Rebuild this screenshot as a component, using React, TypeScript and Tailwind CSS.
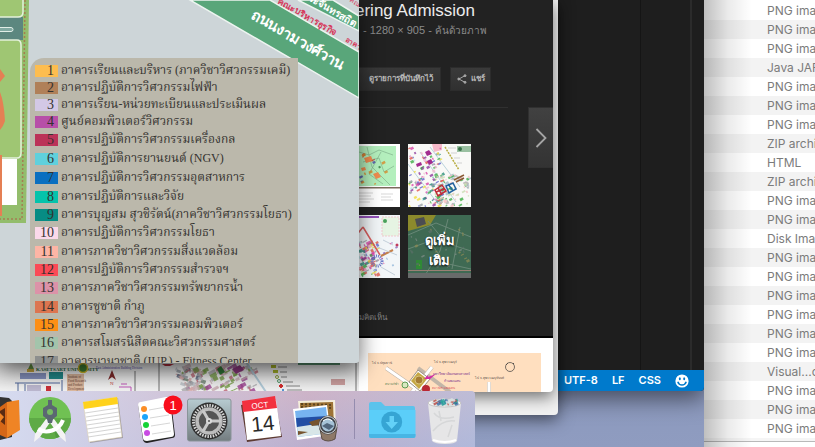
import React from "react";

type Legend = { n: number; name: string; swatch: string; tight?: boolean };

const legend: Legend[] = [
  { n: 1, name: "อาคารเรียนและบริหาร (ภาควิชาวิศวกรรมเคมี)", swatch: "bg-[#fdbd4f]", tight: true },
  { n: 2, name: "อาคารปฏิบัติการวิศวกรรมไฟฟ้า", swatch: "bg-[#b08058]", tight: true },
  { n: 3, name: "อาคารเรียน-หน่วยทะเบียนและประเมินผล", swatch: "bg-[#d3c8e6]", tight: true },
  { n: 4, name: "ศูนย์คอมพิวเตอร์วิศวกรรม", swatch: "bg-[#b74fa8]", tight: true },
  { n: 5, name: "อาคารปฏิบัติการวิศวกรรมเครื่องกล", swatch: "bg-[#bb3358]" },
  { n: 6, name: "อาคารปฏิบัติการยานยนต์ (NGV)", swatch: "bg-[#5fd0dc]" },
  { n: 7, name: "อาคารปฏิบัติการวิศวกรรมอุตสาหการ", swatch: "bg-[#0a6fc0]" },
  { n: 8, name: "อาคารปฏิบัติการและวิจัย", swatch: "bg-[#05c3ab]" },
  { n: 9, name: "อาคารบุญสม สุวชิรัตน์(ภาควิชาวิศวกรรมโยธา)", swatch: "bg-[#078c84]", tight: true },
  { n: 10, name: "อาคารปฏิบัติการวิศวกรรมโยธา", swatch: "bg-[#fbd9ea]" },
  { n: 11, name: "อาคารภาควิชาวิศวกรรมสิ่งแวดล้อม", swatch: "bg-[#fdb5a5]" },
  { n: 12, name: "อาคารปฏิบัติการวิศวกรรมสำรวจฯ", swatch: "bg-[#fb4b56]", tight: true },
  { n: 13, name: "อาคารภาควิชาวิศวกรรมทรัพยากรน้ำ", swatch: "bg-[#dc92a8]" },
  { n: 14, name: "อาคารชูชาติ กำภู", swatch: "bg-[#dc7550]" },
  { n: 15, name: "อาคารภาควิชาวิศวกรรมคอมพิวเตอร์", swatch: "bg-[#fd8f14]", tight: true },
  { n: 16, name: "อาคารสโมสรนิสิตคณะวิศวกรรมศาสตร์", swatch: "bg-[#a3c4ab]" },
  { n: 17, name: "อาคารนานาชาติ (IUP.) - Fitness Center", swatch: "bg-[#8d8f8e]" },
];

const kinds = [
  "PNG image", "PNG image", "PNG image", "Java JAR file", "PNG image", "PNG image",
  "PNG image", "ZIP archive", "HTML", "ZIP archive", "PNG image", "PNG image",
  "Disk Image", "PNG image", "PNG image", "PNG image", "PNG image", "PNG image",
  "PNG image", "Visual...cument", "PNG image", "PNG image", "PNG image",
];

const mapColors = ["#d946a8", "#3fae49", "#e2574c", "#5b62c9", "#f0dc3c", "#8e3a9d", "#b9e3ea", "#f3b9cf", "#9aa0a6", "#2a8f7d"];

function Blocks({ seed, count, x, y, w, h, size = 5, tilt = -28, colors = mapColors }: {
  seed: number; count: number; x: number; y: number; w: number; h: number; size?: number; tilt?: number; colors?: string[];
}) {
  let s = seed;
  const rnd = () => (s = (s * 16807) % 2147483647) / 2147483647;
  return (
    <g>
      {Array.from({ length: count }, (_, i) => {
        const px = x + rnd() * w;
        const py = y + rnd() * h;
        const bw = 1 + rnd() * size;
        const bh = 1 + rnd() * size * 0.6;
        const c = colors[Math.floor(rnd() * colors.length)];
        return <rect key={i} x={px} y={py} width={bw} height={bh} fill={c} opacity={0.8} transform={`rotate(${tilt} ${px} ${py})`} />;
      })}
    </g>
  );
}

function FinderWindow() {
  return (
    <section className="absolute inset-y-0 left-[704px] right-0 overflow-hidden bg-white font-[Inter,sans-serif]">
      <ul className="pt-px">
        {kinds.map((k, i) => (
          <li key={i} className="h-[19px] overflow-hidden whitespace-nowrap pl-[63px] text-[12px] leading-[19px] text-[#7b7b7b] even:bg-[#f3f3f3]">{k}</li>
        ))}
      </ul>
      <div className="h-[3px] bg-[#f5f5f5]" />
      <div className="h-4 border-t border-[#b9b9b9] bg-white" />
      <div className="absolute inset-y-0 left-0 w-12 bg-linear-to-r from-black/25 via-black/8 to-transparent" />
    </section>
  );
}

function EditorWindow() {
  return (
    <section className="absolute left-[540px] top-0 flex h-[391px] w-[164px] flex-col overflow-hidden rounded-br-[4px] bg-[#1e1e1e] shadow-[0_8px_22px_rgba(0,0,0,0.5)]">
      <div className="flex flex-1 justify-end">
        <div className="w-[50px] border-l border-[#151515]" />
        <div className="w-[14px] border-l-2 border-[#2b2b2b]" />
      </div>
      <footer className="flex h-[21px] items-center justify-end gap-[14px] bg-[#007acc] pr-[15px] font-[Inter,sans-serif] text-[11px] font-semibold text-white">
        <button type="button">UTF-8</button>
        <button type="button">LF</button>
        <button type="button">CSS</button>
        <button type="button" aria-label="Feedback">
          <svg viewBox="0 0 14 14" className="size-[14px]">
            <circle cx="7" cy="7" r="6.6" fill="#fff" />
            <ellipse cx="4.8" cy="4.8" rx="1" ry="1.5" fill="#007acc" />
            <ellipse cx="9.2" cy="4.8" rx="1" ry="1.5" fill="#007acc" />
            <path d="M2.8 7.8c.7 2.2 2.2 3.3 4.2 3.3s3.500-1.100 4.200-3.300" fill="none" stroke="#007acc" strokeWidth="1.500" />
          </svg>
        </button>
      </footer>
    </section>
  );
}

function GreenMap() {
  return (
    <svg viewBox="0 0 63 63" className="size-full">
      <rect width="63" height="63" fill="#fff" />
      <rect x="0" y="2" width="59" height="40" fill="#b4efbd" />
      <g stroke="#79a884" strokeWidth=".6" fill="none">
        <path d="M22 8l10 3 10-5 14 5M26 18l16-4 5 14 10-6M30 3l5 20 18 18M44 8l-12 22 14 10" />
      </g>
      <g fill="#ef8c4f">
        <path d="M27 14l7-2 2 5-7 2zM36 30l5-2 3 5-5 2zM24 24l4-1 1 3-4 1z" />
      </g>
      <Blocks seed={21} count={14} x={22} y={10} w={25} h={30} size={3} colors={["#4a49a8", "#c3423a", "#d88a2a", "#357a43"]} />
      <rect y="43" width="63" height="1.500" fill="#7c6b5d" />
      <g stroke="#c5c5c5" strokeWidth=".7"><path d="M22 49h14M22 52h12M22 55h15M22 58h11M44 50h12M44 53h10M44 56h12" /></g>
    </svg>
  );
}

function CampusMap() {
  return (
    <svg viewBox="0 0 63 63" className="size-full">
      <rect width="63" height="63" fill="#f9f9f7" />
      <path d="M24 0h10v6l-8 2z" fill="#f6b9c9" />
      <path d="M37 3l14 23" stroke="#b8ad43" strokeWidth="1.500" strokeDasharray="2 1" />
      <path d="M40 4h8M43 9h6M46 14h6M49 19h5" stroke="#aaa" strokeWidth=".5" />
      <path d="M0 20l30 40M12 8l36 50M22 3l30 40" stroke="#b9d3dc" strokeWidth="1" />
      <Blocks seed={7} count={120} x={0} y={4} w={34} h={58} size={3} />
      <Blocks seed={99} count={90} x={26} y={30} w={34} h={32} size={3} colors={["#c8ddb0", "#9fb8c4", "#f3c0c0", "#3fae49", "#b0b0b0"]} />
      <rect x="49" y="2" width="14" height="6" fill="#9ac0a1" /><circle cx="52" cy="5" r="2" fill="#39724a" />
      <path d="M17 8l4-2 3 4-5 2zM19 17l4-2 2 4-4 2zM8 20l5-2 1 3-5 2z" fill="#a22c8f" />
      <path d="M27 46l7-5 4 6-8 5zM30 44l4 7M28 48l8-3" fill="none" stroke="#c02b39" strokeWidth="1.500" />
      <path d="M38 42l7-3 3 6-7 4zM40 40l5 7" fill="none" stroke="#22639e" strokeWidth="1.500" />
      <path d="M46 36l10-5M48 38l8-4" stroke="#8b5a35" strokeWidth="1.500" />
    </svg>
  );
}

function RoadMap() {
  return (
    <svg viewBox="0 0 63 63" className="size-full">
      <rect width="63" height="63" fill="#f2f6f8" />
      <path d="M22 2h20" stroke="#9452b9" strokeWidth="2" />
      <rect x="45" y="2" width="17" height="19" fill="#e6f4e3" stroke="#f4b6c0" strokeWidth=".7" strokeDasharray="2 1" />
      <circle cx="48" cy="6" r="2" fill="#4aa15a" />
      <Blocks seed={44} count={100} x={17} y={26} w={22} h={34} size={4} />
      <path d="M26 12L43 40M26 12L18 22" stroke="#d95f5f" strokeWidth="1.500" fill="none" />
      <circle cx="40" cy="46" r="5" fill="none" stroke="#6d7ac9" strokeWidth="3" strokeDasharray="1 1" />
      <path d="M44 41l12-6" stroke="#c4804a" strokeWidth="2" />
      <path d="M46 25l10 5M40 32l20 8M44 52l14 8" stroke="#c4d0da" />
      <circle cx="60" cy="30" r="1.500" fill="#c23c5c" />
      <Blocks seed={4} count={8} x={44} y={26} w={16} h={32} size={2} colors={["#e26aa8", "#8fb4d8", "#8b67b8"]} />
    </svg>
  );
}

function MoreMap() {
  return (
    <svg viewBox="0 0 63 63" className="size-full">
      <rect width="63" height="63" fill="#3f6a53" />
      <path d="M0 0h28l-6 10L0 16z" fill="#8c8a2c" />
      <path d="M7 4l9-2 2 7-9 3z" fill="#4b4d52" />
      <g stroke="#6d8b7b" strokeWidth=".9" fill="none">
        <path d="M0 20l28-12 35 14M20 6l18 22 25 8M0 34l22-8 14 22 27 6M40 4l-8 32-16 26M52 12l-8 42" />
      </g>
      <path d="M8 45h6v9H8z" fill="#2f8a35" />
      <Blocks seed={12} count={30} x={2} y={12} w={56} h={40} size={3} colors={["#7c8b84", "#596f66", "#8a8a55"]} />
      <rect y="55" width="63" height="1" fill="#9a8074" />
      <rect y="58" width="63" height="5" fill="#686b6a" />
    </svg>
  );
}

function BrowserWindow() {
  return (
    <section className="absolute left-[337px] top-0 h-[392px] w-[216px] overflow-hidden rounded-br-[4px] bg-white font-['Liberation_Sans','Noto_Sans',sans-serif] shadow-[0_5px_16px_rgba(0,0,0,0.55)]">
      <div className="flex h-[338px] flex-col border-b-2 border-black bg-[#222]">
        <h1 className="h-5 whitespace-nowrap pl-[18px] text-[17px] leading-[22px] text-[#ececec]">ering Admission</h1>
        <p className="h-5 whitespace-nowrap pl-[26px] text-[11px] leading-5 text-[#8b8b8b]">- 1280 × 905 - <span className="text-[10px]">ค้นด้วยภาพ</span></p>
        <div className="mt-[27px] flex h-6 w-[154px] justify-end gap-[9px] text-[8px] font-bold text-[#b8b8b8]">
          <button type="button" className="w-[88px] shrink-0 whitespace-nowrap border border-[#2c2c2c] bg-linear-to-b from-[#383838] to-[#303030] pl-2">ดูรายการที่บันทึกไว้</button>
          <button type="button" className="flex w-[41px] shrink-0 items-center justify-center gap-1 border border-[#2c2c2c] bg-linear-to-b from-[#3a3a3a] to-[#303030]">
            <svg viewBox="0 0 10 10" className="size-[10px]" fill="#a8a8a8" stroke="#a8a8a8">
              <path d="M8 1.600L2 5l6 3.400" fill="none" />
              <circle cx="8" cy="1.700" r="1" /><circle cx="1.800" cy="5" r="1" /><circle cx="8" cy="8.300" r="1" />
            </svg>
            แชร์
          </button>
        </div>
        <div className="mt-4 flex h-[61px] justify-between">
          <div className="w-[171px] border-t border-[#303030]" />
          <button type="button" aria-label="Next image" className="flex w-[25px] items-center justify-center border border-r-0 border-[#303030] bg-linear-to-b from-[#414141] to-[#333]">
            <svg viewBox="0 0 12 20" className="h-5 w-3" fill="none" stroke="#a5a5a5" strokeWidth="1.800"><path d="M1.500 1l9 9-9 9" /></svg>
          </button>
        </div>
        <div className="-mt-6 grid grid-cols-[63px_63px] grid-rows-[63px_63px] gap-2">
          <a href="#map1"><GreenMap /></a>
          <a href="#map2"><CampusMap /></a>
          <a href="#map3"><RoadMap /></a>
          <a href="#more" className="grid place-items-center">
            <span className="col-start-1 row-start-1 size-full"><MoreMap /></span>
            <span className="col-start-1 row-start-1 pt-2 text-center text-[13px] font-bold leading-5 text-white [text-shadow:0_1px_2px_#000]">ดูเพิ่ม<br />เติม</span>
          </a>
        </div>
        <p className="mt-8 pl-[22px] text-[8px] leading-4 text-[#808080]">มคิดเห็น</p>
      </div>
      <svg viewBox="0 0 173 39" className="ml-[31px] mt-[15px] h-[39px] w-[173px] font-['Liberation_Serif','Noto_Sans',serif]">
        <rect width="173" height="39" fill="#ffdfbf" />
        <g stroke="#c2b6a8" strokeWidth="4"><path d="M18 15l36 25M64 14L44 39M50 15l32 24M121 39V29" /></g>
        <g stroke="#fff" strokeWidth="3"><path d="M18 15l36 25M64 14L44 39M121 39V29" /></g>
        <path d="M50 17l12 9-10 12-11-9z" fill="#fff" stroke="#9b8f82" />
        <path d="M50 19l9 7-8 10-8-8z" fill="#c5a743" />
        <circle cx="51" cy="27" r="4" fill="#a67d35" stroke="#d8c37c" />
        <path d="M56 26l4-4v2l8-3-6 5z" fill="#d32ba5" />
        <circle cx="58" cy="36" r="4" fill="#b92734" />
        <circle cx="37" cy="32" r="3" fill="#d8e8c1" stroke="#5d9a52" />
        <g fill="#564d47" fontSize="3"><text x="4" y="11">ไป จ.ปทุมธานี</text><text x="66" y="10">ไป จ.สุพรรณบุรี</text><text x="107" y="26">ไป จ.สุพรรณบุรี/นนท์</text></g>
        <g fill="#7c368d" fontSize="3.500"><text x="65" y="22">มหาวิทยาลัยเกษตรศาสตร์</text><text x="76" y="29">กำแพงแสน</text></g>
        <text x="64" y="36" fill="#dc4f58" fontSize="3">สถานีกำแพงแสน</text>
        <text x="17" y="32" fill="#54804e" fontSize="3">สนามกีฬา</text>
        <circle cx="142" cy="14" r="4.500" fill="none" stroke="#55504b" strokeWidth=".8" /><path d="M138 12l2-2m5 0l1 1" fill="none" stroke="#55504b" />
      </svg>
    </section>
  );
}

function BackMap() {
  return (
    <svg viewBox="0 0 359 30" preserveAspectRatio="xMinYMin slice" className="absolute left-0 top-[362px] h-[30px] w-[359px] font-['Liberation_Serif',serif]">
      <defs>
        <linearGradient id="shade" x2="0" y2="1"><stop stopColor="#000" stopOpacity=".2" /><stop offset="1" stopColor="#000" stopOpacity=".05" /></linearGradient>
      </defs>
      <rect width="359" height="30" fill="#fff" />
      <path d="M31 1l3 6h-6z" fill="#6d9d45" /><path d="M27 7h7v3h-7z" fill="#d5b345" />
      <text x="36" y="9" fontSize="5" fontWeight="bold" fill="#2a6a3c">KASETSART UNIVERSITY</text>
      <circle cx="83" cy="6" r="4.500" fill="#448b38" stroke="#e0c72c" strokeWidth="1.500" />
      <rect x="20" y="11" width="26" height="6" fill="#8f9ccc" /><rect x="49" y="10" width="14" height="7" fill="#249394" />
      <rect x="67" y="12" width="17" height="18" fill="#e9c4a8" />
      <g fontSize="3" fill="#6b3d32"><text x="68" y="16">Institute of</text><text x="68" y="20">Food Research</text><text x="68" y="24">and Product</text><text x="68" y="28">Development</text></g>
      <path d="M15 21h45M18 21v9M62 18v12M25 30v-8" stroke="#526ca3" fill="none" />
      <path d="M27 23h14v6H27z" fill="#c7c3dc" /><path d="M46 24h5v5h-5z" fill="#d7343b" />
      <path d="M112 8l4 10-4-3-4 3z" fill="#892d2e" /><text x="110" y="23" fontSize="5" fill="#c33">N</text>
      <text x="96" y="7" fontSize="3" fill="#584ab1">East Administration Building Division</text>
      <path d="M135 9v21M159 1v29M356 0v30" stroke="#787878" fill="none" />
      <path d="M119 25h12v5M121 22h6" stroke="#cc5bc3" fill="none" />
      <path d="M162 2h12l-4 2h-5z" fill="#bd3341" />
      <Blocks seed={33} count={40} x={176} y={4} w={28} h={22} size={5} tilt={20} colors={["#5a6a86", "#9ba3ad", "#e2b1b1", "#738877", "#c6ccd2"]} />
      <Blocks seed={71} count={80} x={180} y={3} w={74} h={26} size={7} colors={["#7ea84b", "#a6479a", "#c96c7c", "#d5b8be", "#b7b4b8", "#d5b8be"]} />
      <path d="M217 7l4-3 4 6-5 3z" fill="#35823b" /><path d="M232 7l8-4 4 5-8 4z" fill="#9b3f8c" />
      <g fill="#b4c12e"><rect x="271" y="3" width="5" height="3" /><rect x="273" y="8" width="5" height="3" /></g>
      <circle cx="277" cy="15" r="1.500" fill="none" stroke="#93ad41" /><circle cx="279" cy="19" r="1.500" fill="none" stroke="#55a070" />
      <path d="M281 22v4m-2-2h4" stroke="#df3030" strokeWidth="2" /><circle cx="283" cy="28" r="1" fill="#267bd4" />
      <g stroke="#8a8a8a"><path d="M278 5h9M280 10h7M281 15h6M283 20h10M286 24h14M287 28h15" /></g>
      <rect x="298" y="0" width="42" height="3" fill="#5e9a76" /><rect x="331" y="17" width="14" height="6" fill="#d9a9a9" />
      <path d="M246 0l20 30" stroke="#bbd6e4" strokeWidth="2" />
      <rect width="359" height="30" fill="url(#shade)" />
    </svg>
  );
}

function MapPicture() {
  return (
    <svg viewBox="0 0 359 363" className="col-start-1 row-start-1 size-full font-['Noto_Sans','Liberation_Sans',sans-serif]">
      <rect width="359" height="363" fill="#cdd5d8" />
      <path d="M0 0h29l-3 223H0z" fill="#93bd6c" />
      <path d="M0 0h23v12q0 5-5 5H0zM0 40h17q5 0 5 5v108q0 5-5 5H0z" fill="#9fc673" />
      <path d="M0 17h23v23H0z" fill="#5c877f" />
      <path d="M0 17h18q5 0 5-5V0M0 40h17q4 0 4 5v108q0 5-4 5H0" fill="none" stroke="#e4f1dc" strokeWidth="1.500" />
      <path d="M0 27.500h11q2 0 2 2t-2 2H0" fill="#80a9a1" stroke="#e1eee7" />
      <path d="M25 0l-3 219H0" fill="none" stroke="#a57d52" strokeWidth="1.500" strokeDasharray="2 2" />
      <path d="M0 159h17v46H0z" fill="#fff" />
      <path d="M0 69l5 7-5 6zM0 92q4 10 5 29-2 6-5 9zM0 155h2v61H0z" fill="#e57f54" />
      <path d="M190 0h80l89 52v46z" fill="#59a67a" stroke="#edf4f0" strokeWidth="1.500" />
      <path d="M298 0h35l26 16v15z" fill="#59a67a" stroke="#edf4f0" strokeWidth="1.500" />
      <g transform="rotate(30 251 16)"><text x="251" y="18" fontSize="15" fontWeight="bold" fill="#fff">ถนนงามวงศ์วาน</text></g>
      <g transform="rotate(30 280 2)"><text x="278" y="4" fontSize="9" fill="#d6385a" fontWeight="bold">คณะบริหารธุรกิจ</text></g>
      <g transform="rotate(30 315 2)"><text x="308" y="4" fontSize="10" fill="#fff" fontWeight="bold">ระจันทรสถิต</text></g>
      <g transform="rotate(30 345 41)"><text x="345" y="41" fontSize="7" fill="#d6385a" fontWeight="bold">อาคาร</text></g>
      <g transform="rotate(30 350 1)"><text x="349" y="2" fontSize="7" fill="#d6385a">คณะ</text></g>
    </svg>
  );
}

function PreviewWindow() {
  return (
    <section className="absolute left-0 top-0 grid h-[363px] w-[359px] overflow-hidden rounded-br-[4px] bg-[#cdd5d8] shadow-[0_6px_22px_rgba(0,0,0,0.6)]">
      <MapPicture />
      <div className="col-start-1 row-start-1 ml-[30px] mt-[58px] h-[305px] w-[268px] overflow-hidden rounded-tl-[14px] bg-[#bbb8ab] pl-[5px] pt-1">
        <ol className="font-['Liberation_Serif','Noto_Serif_Thai',serif] text-[12px] text-[#34322f]">
          {legend.map((r) => (
            <li key={r.n} className={`flex items-center gap-[3px] whitespace-nowrap ${r.tight ? "h-[17px]" : "h-[19px]"}`}>
              <span className={`h-3 w-[23px] shrink-0 pr-1 text-right text-[14px] leading-3 ${r.swatch}`}>{r.n}</span>
              <span className="leading-[17px]">{r.name}</span>
            </li>
          ))}
        </ol>
      </div>
    </section>
  );
}

function DockItem({ label, children, first }: { label: string; children: React.ReactNode; first?: boolean }) {
  return (
    <button type="button" aria-label={label} className={first ? "w-6 shrink-0" : "w-[53px] shrink-0"}>
      <svg viewBox={first ? "0 0 24 56" : "0 0 53 56"} className="h-14 w-full font-['Liberation_Sans',sans-serif]">{children}</svg>
    </button>
  );
}

function Dock() {
  return (
    <nav className="absolute bottom-0 left-0 flex h-14 w-[475px] overflow-hidden rounded-tr-[4px] bg-linear-to-b from-[#cbbdce] to-[#a9b4d8]">
      <div className="absolute inset-0 bg-linear-to-r from-[#d5dbf0] via-[#d0a8c0]/45 via-65% to-[#b5bcdc]/60" />
      <div className="relative flex">
        <DockItem label="Sublime Text" first>
          <path d="M0 6l9 1 3 3v36l-12 3z" fill="#333" /><path d="M7 11l12-2 1 30-13 8z" fill="#ef8425" /><path d="M0 16l7-5v36l-7-3z" fill="#d56718" />
          <path d="M0 20l5-3v17l-5-4z" fill="#5b2b12" /><path d="M0 22l4 4-4 5z" fill="#ef8425" />
        </DockItem>
        <DockItem label="Android Studio">
          <circle cx="26" cy="27" r="21" fill="#70c153" /><path d="M5 27a21 21 0 0042 0z" fill="#5eaa46" />
          <path d="M28 29l14 14-10 4z" fill="#438b3a" opacity=".5" />
          <path d="M22 28l5 2-11 16-6 5 1-8zM30 28l-5 2 11 16 6 5-1-8z" fill="#f3f3f3" />
          <path d="M14 38c8 5 21 2 25-9" stroke="#fff" strokeWidth="4" fill="none" />
          <path d="M24 9h4v5l5 3v8l-4 3-1 4h-4l-1-4-4-3v-8l5-3z" fill="#5b6772" /><circle cx="26" cy="21" r="3" fill="#76bb63" />
        </DockItem>
        <DockItem label="Notes">
          <path d="M7 12l34-5 5 40-33 5z" fill="#6f6c68" opacity=".5" /><path d="M6 11l34-5 5 40-33 5z" fill="#fff" stroke="#d8cba4" strokeWidth=".5" />
          <path d="M6 11l34-5 1 7-34 5z" fill="#ffd21c" />
          <g stroke="#c8c8c8" strokeWidth=".8"><path d="M8 22l33-5M9 26l33-5M9 30l33-5M10 34l33-5M10 38l33-5M11 42l33-5M11 46l33-5" /></g>
        </DockItem>
        <DockItem label="Reminders">
          <path d="M8 13l29-6q3 0 4 3l4 34q0 3-3 3l-25 5q-3 0-4-3z" fill="#222" /><path d="M8 14q0-3 3-3l25-5q3 0 4 3l4 34q0 3-3 3l-24 4q-4 0-4-3z" fill="#fff" />
          <g stroke="#ccc" strokeWidth=".8"><path d="M19 19l17-3M20 27l19-3M21 35l19-3M22 43l19-3" /></g>
          <circle cx="14" cy="18" r="3" fill="#fb8d26" /><circle cx="15" cy="26" r="3" fill="#1aa4fb" /><circle cx="16" cy="34" r="3" fill="#16d336" /><circle cx="17" cy="42" r="3" fill="#c84be3" />
          <circle cx="43" cy="14" r="9.500" fill="#f90d1b" /><text x="43" y="19" textAnchor="middle" fontSize="13" fill="#fff">1</text>
        </DockItem>
        <DockItem label="System Preferences">
          <defs><linearGradient id="steel" x2="0" y2="1"><stop stopColor="#b7cbd1" /><stop offset="1" stopColor="#747d80" /></linearGradient></defs>
          <rect x="4.500" y="8" width="43.500" height="42" rx="2" fill="url(#steel)" stroke="#899498" />
          <circle cx="26" cy="30" r="18.500" fill="#303030" /><circle cx="26" cy="30" r="15.500" fill="none" stroke="#d6d6d6" strokeWidth="3" strokeDasharray="1.500 1.200" />
          <circle cx="26" cy="30" r="12" fill="#555" stroke="#bcbcbc" strokeWidth="3.500" />
          <path d="M26 30L20 19.500M26 30h12M26 30l-6 10.500" stroke="#c8c8c8" strokeWidth="3" /><circle cx="26" cy="30" r="3" fill="#dadada" /><circle cx="26" cy="30" r="1" fill="#555" />
        </DockItem>
        <DockItem label="Calendar">
          <path d="M5 14l34-6 7 38-35 5z" fill="#5d3b32" /><path d="M8 11l31-5 6 37-33 5z" fill="#ececec" /><path d="M7 13l33-4 5 36-34 4z" fill="#fff" />
          <path d="M6 10l33-5 2 12-34 4z" fill="#f2303f" />
          <g transform="rotate(-6 25 25)" textAnchor="middle"><text x="25" y="17" fontSize="8" fill="#fff">OCT</text><text x="26" y="40" fontSize="21" fill="#292929">14</text></g>
        </DockItem>
        <DockItem label="Preview">
          <path d="M9 10l37-1 1 31-35 1z" fill="#f5eedb" /><path d="M11 12l33-1 1 27-33 1z" fill="#9d7336" />
          <path d="M12 13l32 1M12 16l32 1" stroke="#5b421e" strokeDasharray="2 2" strokeWidth="2" />
          <path d="M4 18l34-4 4 30-34 5z" fill="#fff" /><path d="M6 20l31-4 3 26-31 4z" fill="#77b4f0" /><path d="M7 27l31-2 1 8-31 4z" fill="#234fa4" /><path d="M8 36l13-2 18 1 1 7-31 4z" fill="#d8e6e8" /><path d="M20 31l10-3 9 2v3l-16 2zM9 40l10 1-10 3z" fill="#76542f" />
          <path d="M31 38l2 10q6 4 13 0l2-12z" fill="#8e7968" stroke="#5b4e45" />
          <circle cx="39" cy="34" r="8" fill="#a6c3d7" stroke="#3e4045" strokeWidth="3" /><circle cx="39" cy="34" r="8.500" fill="none" stroke="#d6d8d8" /><path d="M33 35l5-3 7 3-5 4z" fill="#52677d" /><path d="M34 30q5-4 9 0" stroke="#fff" fill="none" />
        </DockItem>
        <div className="flex w-6 justify-center py-2"><div className="w-px bg-[#948cae]" /></div>
        <DockItem label="Downloads">
          <path d="M3 13q0-2 2-2h10l4 4h28q2 0 2 2v5H3z" fill="#5bc3ec" /><path d="M3 19h46.500v26q0 2-2 2H5q-2 0-2-2z" fill="#5bcef9" /><path d="M3 43h46.500v2q0 2-2 2H5q-2 0-2-2z" fill="#48b5e4" />
          <circle cx="25.700" cy="31" r="10.500" fill="#36a5d4" /><path d="M23.500 25h4.500v6h4l-6.300 7-6.200-7h4z" fill="#63d1f8" />
        </DockItem>
        <DockItem label="Trash">
          <path d="M9 12l33 0-4 38q-2 3-12 3t-13-3z" fill="#e6e6e7" /><ellipse cx="25.500" cy="12" rx="16.500" ry="4" fill="#f7f7f7" stroke="#c3c3c3" />
          <path d="M12 12l4-4 5 2 3-3 5 2 4-2 6 5-5 3H17z" fill="#d7dfdf" /><Blocks seed={18} count={28} x={14} y={8} w={22} h={5} size={4} colors={["#282b33", "#396da5", "#bd4640", "#e9e9e9", "#2aa39b"]} />
          <path d="M15 22q6 8 20 4M14 40q10-12 22-10M20 20l2 10M33 34l-4 12" stroke="#cfd0d2" strokeWidth="1.500" opacity=".7" fill="none" /><path d="M14 49q12 4 23 0" stroke="#fff" strokeWidth="2" fill="none" />
        </DockItem>
      </div>
    </nav>
  );
}

export default function App() {
  return (
    <main className="relative h-screen w-full overflow-hidden bg-linear-to-b from-[#7484aa] to-[#8f9cc0]">
      <EditorWindow />
      <FinderWindow />
      <div className="absolute left-[300px] top-0 h-[415px] w-[258px] rounded-br-[4px] bg-[#f1f1f1] shadow-[0_5px_16px_rgba(0,0,0,0.5)]" />
      <BrowserWindow />
      <BackMap />
      <PreviewWindow />
      <Dock />
    </main>
  );
}
